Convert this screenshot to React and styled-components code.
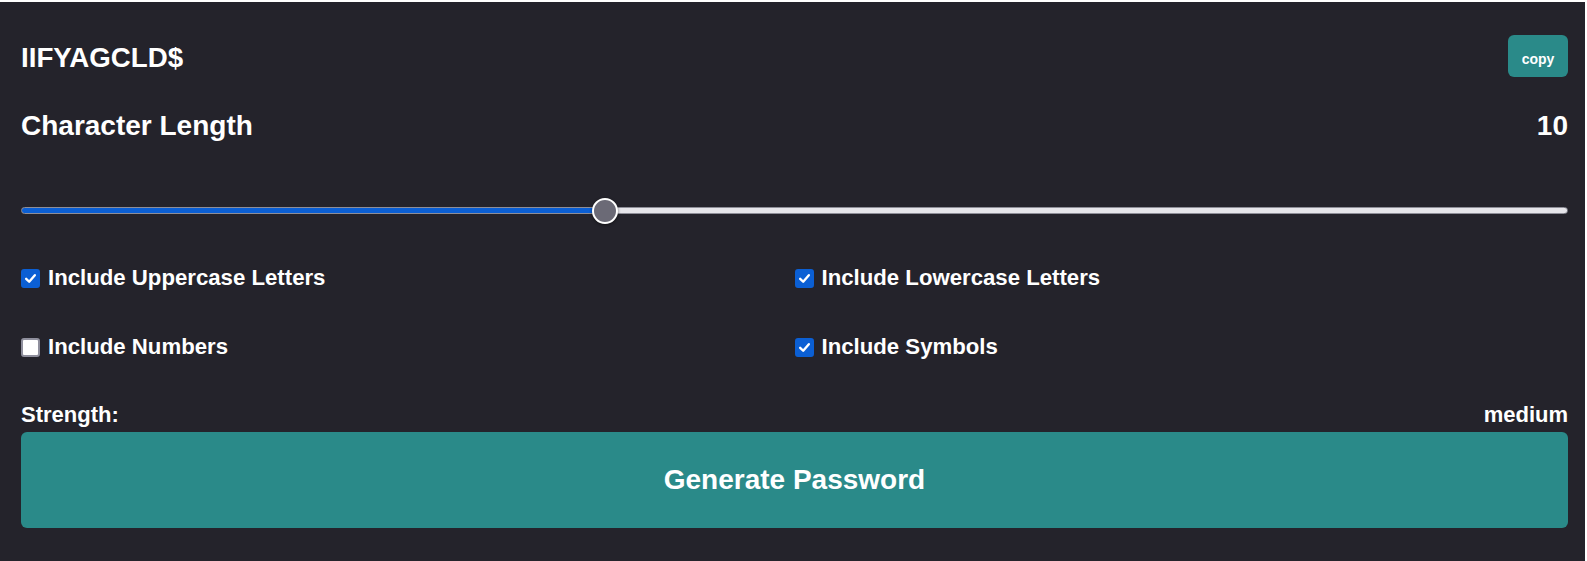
import React, {useState} from "react";
import styled, {createGlobalStyle} from "styled-components";

const GlobalStyle = createGlobalStyle`
  body {
    margin: 0;
    background: #ffffff;
    font-family: "Liberation Sans", Arial, sans-serif;
  }
`;

const Container = styled.div`
  margin: 2px 2px 0 0;
  height: 559px;
  box-sizing: border-box;
  padding: 33px 17px 0 21px;
  background: #24232b;
  color: #ffffff;
  font-weight: bold;
`;

const Row = styled.div`
  display: flex;
  align-items: center;
  justify-content: space-between;
  margin-top: ${p => p.top || 0}px;
`;

const Password = styled.div`
  font-size: 27.7px;
  padding-top: 3px;
`;

const CopyButton = styled.button`
  width: 60px;
  height: 42px;
  padding: 6px 0 0;
  border: none;
  border-radius: 6px;
  background: #2a8a89;
  color: #ffffff;
  font-family: inherit;
  font-weight: bold;
  font-size: 14px;
  cursor: pointer;
`;

const Title = styled.div`
  font-size: 28px;
  line-height: 30px;
`;

const Range = styled.input`
  -webkit-appearance: none;
  appearance: none;
  display: block;
  width: 100%;
  height: 7px;
  margin: 0;
  margin-top: ${p => p.top}px;
  border-radius: 4px;
  border: 1px solid #8e8e98;
  box-sizing: border-box;
  outline: none;

  &::-webkit-slider-thumb {
    -webkit-appearance: none;
    width: 26px;
    height: 26px;
    border-radius: 50%;
    background: #6b6a76;
    border: 2px solid #ffffff;
    box-sizing: border-box;
    box-shadow: 0 1px 3px rgba(0, 0, 0, 0.5);
    cursor: pointer;
  }
`;

const Options = styled.div`
  display: grid;
  grid-template-columns: 1fr 1fr;
  row-gap: 45px;
  margin-top: 52px;
`;

const Option = styled.label`
  display: flex;
  align-items: center;
  gap: 8px;
  font-size: 22.2px;
  line-height: 24px;
  cursor: pointer;
`;

const Box = styled.span`
  width: 19px;
  height: 19px;
  box-sizing: border-box;
  border-radius: 3px;
  display: flex;
  align-items: center;
  justify-content: center;
  background: ${p => (p.checked ? "#0b5fd4" : "#ffffff")};
  border: 2px solid ${p => (p.checked ? "#0b5fd4" : "#8f8f9d")};
`;

const Label = styled.div`
  font-size: 22px;
  line-height: 24px;
`;

const Generate = styled.button`
  display: block;
  width: 100%;
  height: 96px;
  margin-top: 5px;
  border: none;
  border-radius: 6px;
  background: #2a8a89;
  color: #ffffff;
  font-family: inherit;
  font-weight: bold;
  font-size: 28px;
  cursor: pointer;
`;

const Check = () => (
  <svg width="13" height="13" viewBox="0 0 12 12">
    <path d="M2 6.3 L4.8 9 L10 3" fill="none" stroke="#ffffff" strokeWidth="2.2" strokeLinecap="round" strokeLinejoin="round"/>
  </svg>
);

const options = [
  {key: "upper", text: "Include Uppercase Letters"},
  {key: "lower", text: "Include Lowercase Letters"},
  {key: "numbers", text: "Include Numbers"},
  {key: "symbols", text: "Include Symbols"},
];

const App = () => {
  const [length, setLength] = useState(10);
  const [checked, setChecked] = useState({upper: true, lower: true, numbers: false, symbols: true});

  const min = 4;
  const max = 20;
  const frac = (length - min) / (max - min);
  // fill stops at thumb centre: thumb is 26px wide
  const stop = `calc(13px + ${frac} * (100% - 26px))`;

  const toggle = key => setChecked(prev => ({...prev, [key]: !prev[key]}));

  return (
    <>
      <GlobalStyle/>
      <Container>
        <Row>
          <Password>IIFYAGCLD$</Password>
          <CopyButton>copy</CopyButton>
        </Row>
        <Row top={34}>
          <Title>Character Length</Title>
          <Title>{length}</Title>
        </Row>
        <Range
          type="range"
          top={66}
          min={min}
          max={max}
          value={length}
          onChange={e => setLength(Number(e.target.value))}
          style={{background: `linear-gradient(to right, #0b5fd4 ${stop}, #e6e5ea ${stop})`}}
        />
        <Options>
          {options.map(o => (
            <Option key={o.key} onClick={() => toggle(o.key)}>
              <Box checked={checked[o.key]}>{checked[o.key] && <Check/>}</Box>
              {o.text}
            </Option>
          ))}
        </Options>
        <Row top={44}>
          <Label>Strength:</Label>
          <Label>medium</Label>
        </Row>
        <Generate>Generate Password</Generate>
      </Container>
    </>
  );
};

export default App;
